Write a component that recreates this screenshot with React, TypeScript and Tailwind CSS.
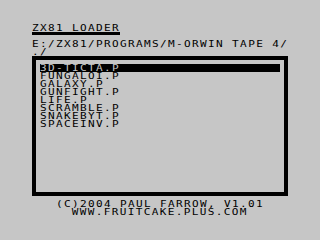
import React from "react";

const files = [
  "3D-TICTA.P",
  "FUNGALOI.P",
  "GALAXY.P",
  "GUNFIGHT.P",
  "LIFE.P",
  "SCRAMBLE.P",
  "SNAKEBYT.P",
  "SPACEINV.P",
];

const row = "h-[8px] flex items-start overflow-visible";
const glyphs =
  "block h-[8px] [font-family:'DejaVu_Sans_Mono',monospace] font-normal text-[8.5px] leading-[8px] tracking-[1.04px] scale-x-[1.3] whitespace-pre";

function Line({ text, center = false, className = "" }: { text: string; center?: boolean; className?: string }) {
  return (
    <div className={row + " " + className + (center ? " justify-center" : "")}>
      <span className={glyphs + (center ? " origin-center" : " origin-left")}>{text}</span>
    </div>
  );
}

export default function App() {
  return (
    <div className="w-[320px] h-[240px] bg-[#c6c6c6] text-black overflow-hidden">
      <div className="pt-[24px] px-[32px] flex flex-col">
        <Line text="ZX81 LOADER" />
        <div className="w-[88px] h-[3px] bg-black mb-[5px]" />
        <Line text="E:/ZX81/PROGRAMS/M-ORWIN TAPE 4/" />
        <Line text="./" />
        <div className="w-[256px] h-[140px] border-[4px] border-black p-[4px] flex flex-col">
          {files.map((f, i) => (
            <Line
              key={f}
              text={f}
              className={"w-full " + (i === 0 ? "bg-black text-[#c6c6c6]" : "")}
            />
          ))}
        </div>
      </div>
      <div className="mt-[4px] flex flex-col items-center">
        <Line center text="(C)2004 PAUL FARROW, V1.01" className="w-full" />
        <Line center text="WWW.FRUITCAKE.PLUS.COM" className="w-full" />
      </div>
    </div>
  );
}
